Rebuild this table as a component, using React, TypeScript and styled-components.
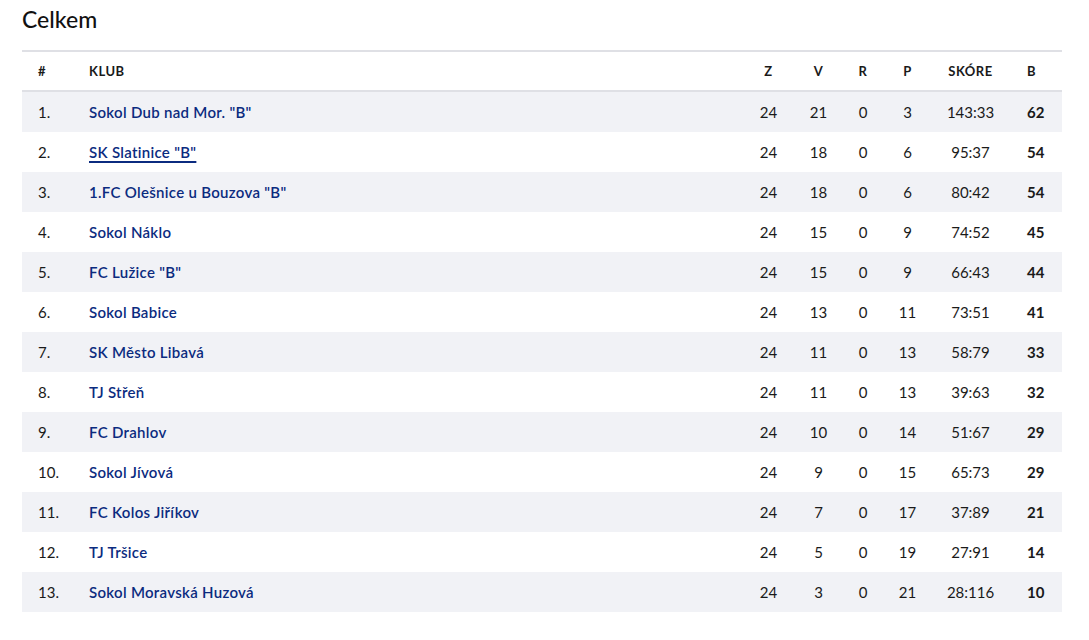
import React from "react";
import styled, { createGlobalStyle } from "styled-components";

const GlobalStyle = createGlobalStyle`
  html, body { margin: 0; padding: 0; background: #fff; }
  body { font-family: Lato, "Noto Sans", sans-serif; color: #1a1a1a; }
`;

const Page = styled.div`
  padding: 6px 27px 0 22px;
`;

const Title = styled.h2`
  margin: 0 0 18px 0;
  font-size: 23px;
  line-height: 26px;
  font-weight: 500;
  color: #111;
`;

const Table = styled.div`
  border-top: 2px solid #dfe0e5;
`;

const cols = "51px 1fr 55px 45px 44px 45px 81px 51px";

const HeaderRow = styled.div`
  display: grid;
  grid-template-columns: ${cols};
  height: 38px;
  align-items: center;
  border-bottom: 2px solid #dfe0e5;
`;

const Row = styled.div<{ $striped: boolean }>`
  display: grid;
  grid-template-columns: ${cols};
  height: 40px;
  align-items: center;
  background: ${(p) => (p.$striped ? "#f1f2f6" : "#fff")};
`;

const HeadCell = styled.div<{ $align?: string }>`
  padding: 0 ${(p) => (p.$align === "left" ? "16px" : "0")};
  font-size: 13px;
  font-weight: 700;
  text-transform: uppercase;
  color: #1a1a1a;
  letter-spacing: 0.5px;
  text-align: ${(p) => p.$align || "center"};
  white-space: nowrap;
`;

const Cell = styled.div<{ $align?: string; $bold?: boolean }>`
  padding: 0 ${(p) => (p.$align === "left" ? "16px" : "0")};
  font-size: 15px;
  color: #1a1a1a;
  font-weight: ${(p) => (p.$bold ? 700 : 400)};
  text-align: ${(p) => p.$align || "center"};
  white-space: nowrap;
`;

const ClubLink = styled.a<{ $underline?: boolean }>`
  color: #0b2b7f;
  font-weight: 600;
  letter-spacing: 0.3px;
  text-decoration: ${(p) => (p.$underline ? "underline" : "none")};
  text-decoration-thickness: 2px;
  text-underline-offset: 3px;
`;

type Team = [string, number, number, number, number, string, number];

const teams: Team[] = [
  ['Sokol Dub nad Mor. "B"', 24, 21, 0, 3, "143:33", 62],
  ['SK Slatinice "B"', 24, 18, 0, 6, "95:37", 54],
  ['1.FC Olešnice u Bouzova "B"', 24, 18, 0, 6, "80:42", 54],
  ["Sokol Náklo", 24, 15, 0, 9, "74:52", 45],
  ['FC Lužice "B"', 24, 15, 0, 9, "66:43", 44],
  ["Sokol Babice", 24, 13, 0, 11, "73:51", 41],
  ["SK Město Libavá", 24, 11, 0, 13, "58:79", 33],
  ["TJ Střeň", 24, 11, 0, 13, "39:63", 32],
  ["FC Drahlov", 24, 10, 0, 14, "51:67", 29],
  ["Sokol Jívová", 24, 9, 0, 15, "65:73", 29],
  ["FC Kolos Jiříkov", 24, 7, 0, 17, "37:89", 21],
  ["TJ Tršice", 24, 5, 0, 19, "27:91", 14],
  ["Sokol Moravská Huzová", 24, 3, 0, 21, "28:116", 10],
];

export default function App() {
  return (
    <Page>
      <GlobalStyle />
      <Title>Celkem</Title>
      <Table>
        <HeaderRow>
          <HeadCell $align="left">#</HeadCell>
          <HeadCell $align="left">Klub</HeadCell>
          <HeadCell>Z</HeadCell>
          <HeadCell>V</HeadCell>
          <HeadCell>R</HeadCell>
          <HeadCell>P</HeadCell>
          <HeadCell>Skóre</HeadCell>
          <HeadCell $align="left">B</HeadCell>
        </HeaderRow>
        {teams.map((t, i) => (
          <Row key={t[0]} $striped={i % 2 === 0}>
            <Cell $align="left">{i + 1}.</Cell>
            <Cell $align="left">
              <ClubLink href="#" $underline={i === 1}>
                {t[0]}
              </ClubLink>
            </Cell>
            <Cell>{t[1]}</Cell>
            <Cell>{t[2]}</Cell>
            <Cell>{t[3]}</Cell>
            <Cell>{t[4]}</Cell>
            <Cell>{t[5]}</Cell>
            <Cell $align="left" $bold>
              {t[6]}
            </Cell>
          </Row>
        ))}
      </Table>
    </Page>
  );
}
